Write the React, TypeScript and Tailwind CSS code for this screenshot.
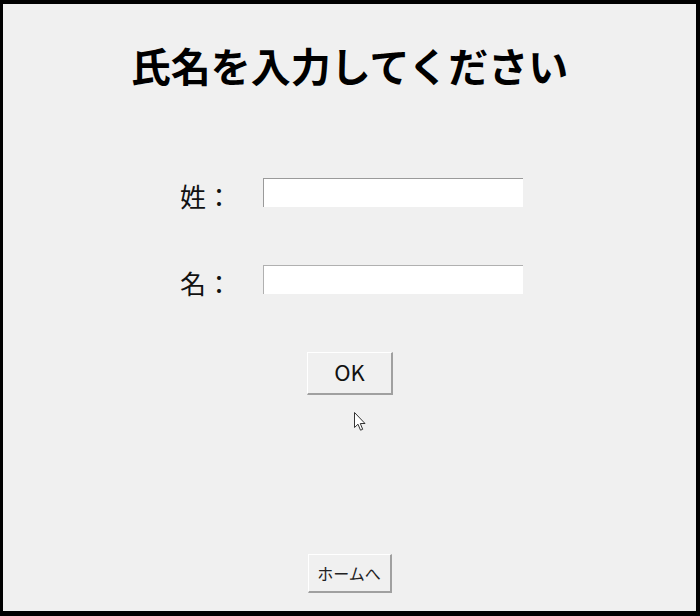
import React from "react";

const jp = { fontFamily: '"Noto Sans CJK JP", "Noto Sans", sans-serif' };

export default function App() {
  return (
    <div className="w-[700px] h-[616px] bg-black pt-[4px] pl-[3px] pr-[4px] pb-[5px]" style={jp}>
      <div className="relative w-full h-full bg-[#f0f0f0] flex flex-col">
        <h1 className="mt-[41px] text-center text-[40px] leading-[40px] font-bold text-black">
          氏名を入力してください
        </h1>

        <div className="mt-[93px] pl-[177px] flex items-start">
          <div className="w-[83px] pt-[5px] text-[26px] leading-[26px] text-[#111]">姓：</div>
          <div className="w-[260px] h-[29px] bg-white border-t border-l border-[#9a9a9a]" />
        </div>

        <div className="mt-[56px] pl-[177px] flex items-start">
          <div className="w-[83px] pt-[5px] text-[26px] leading-[26px] text-[#111]">名：</div>
          <div className="w-[260px] h-[29px] bg-white border-t border-l border-[#b0b0b0]" />
        </div>

        <div className="mt-[56px] flex justify-center">
          <button className="ml-[1px] w-[86px] h-[43px] bg-[#f0f0f0] border-t border-l border-white border-r-2 border-b-2 border-r-[#a0a0a0] border-b-[#a0a0a0] text-[22px] leading-[22px] text-[#111] flex items-center justify-center pb-[4px]">
            OK
          </button>
        </div>

        <div className="mt-auto mb-[18px] flex justify-center">
          <button className="w-[84px] h-[39px] bg-[#f0f0f0] border-t border-l border-white border-r-2 border-b-2 border-r-[#a0a0a0] border-b-[#a0a0a0] text-[16px] leading-[16px] text-[#222] flex items-center justify-center">
            ホームへ
          </button>
        </div>

        <svg
          className="absolute left-[351px] top-[408px]"
          width="13"
          height="20"
          viewBox="0 0 13 20"
        >
          <path
            d="M0.5 0.5 L0.5 15.5 L4 12.2 L6.5 18.2 L8.7 17.3 L6.3 11.5 L11 11.5 Z"
            fill="white"
            stroke="#333"
            strokeWidth="1"
            strokeLinejoin="miter"
          />
        </svg>
      </div>
    </div>
  );
}
